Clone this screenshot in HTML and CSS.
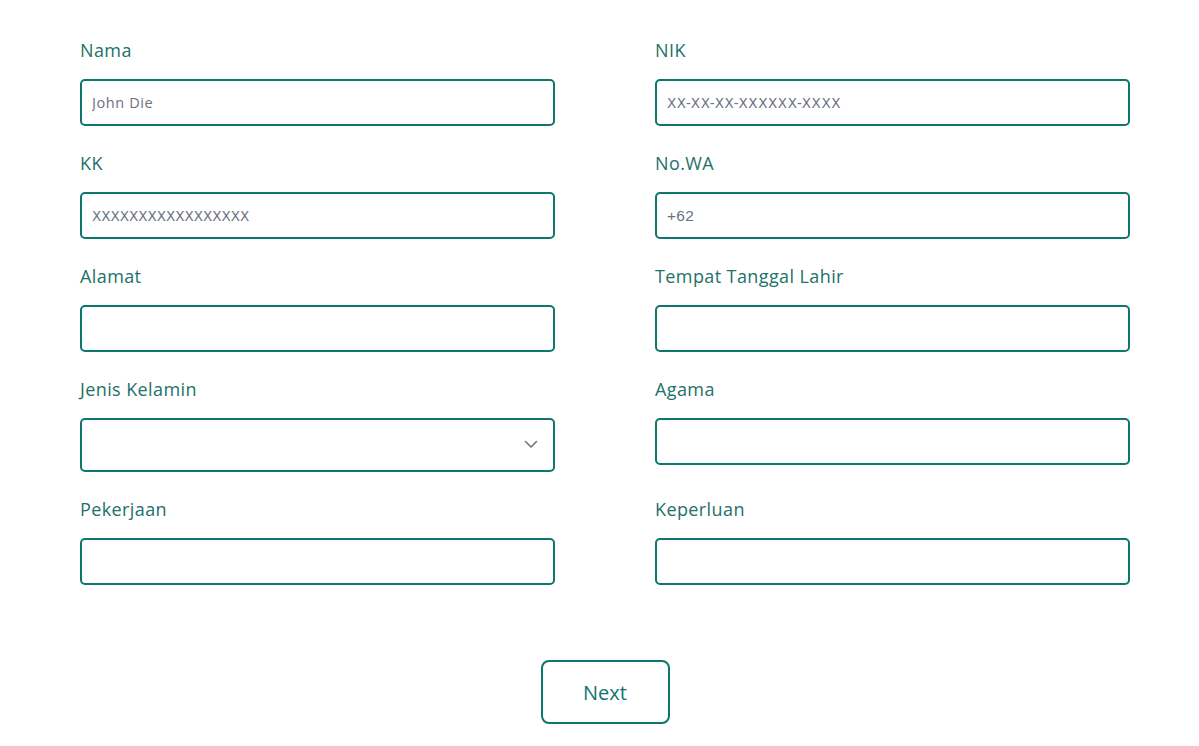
FILE: index.html
```html
<!DOCTYPE html>
<html lang="id">
<head>
<meta charset="utf-8">
<title>Form</title>
<link rel="stylesheet" href="styles.css">
</head>
<body>
<main class="page">
  <form class="form">
    <div class="grid">
      <div class="field">
        <label class="label">Nama</label>
        <input class="input" type="text" placeholder="John Die">
      </div>
      <div class="field">
        <label class="label">NIK</label>
        <input class="input mono nik" type="text" placeholder="XX-XX-XX-XXXXXX-XXXX">
      </div>
      <div class="field">
        <label class="label">KK</label>
        <input class="input mono" type="text" placeholder="XXXXXXXXXXXXXXXXX">
      </div>
      <div class="field">
        <label class="label">No.WA</label>
        <input class="input alt" type="text" placeholder="+62">
      </div>
      <div class="field">
        <label class="label">Alamat</label>
        <input class="input" type="text">
      </div>
      <div class="field">
        <label class="label">Tempat Tanggal Lahir</label>
        <input class="input" type="text">
      </div>
      <div class="field">
        <label class="label">Jenis Kelamin</label>
        <div class="select-wrap">
          <select class="select"><option></option></select>
          <svg class="chevron" width="14" height="9" viewBox="0 0 14 9"><path d="M1.5 1.5 L7 7 L12.5 1.5" fill="none" stroke="#6b7280" stroke-width="1.6" stroke-linecap="round" stroke-linejoin="round"/></svg>
        </div>
      </div>
      <div class="field">
        <label class="label">Agama</label>
        <input class="input" type="text">
      </div>
      <div class="field">
        <label class="label">Pekerjaan</label>
        <input class="input" type="text">
      </div>
      <div class="field">
        <label class="label">Keperluan</label>
        <input class="input" type="text">
      </div>
    </div>
    <div class="actions">
      <button class="btn" type="button">Next</button>
    </div>
  </form>
</main>
</body>
</html>
```

FILE: styles.css
```css
* { box-sizing: border-box; }
html, body { margin: 0; padding: 0; background: #ffffff; }
body { font-family: "Open Sans", "Noto Sans", sans-serif; }

.page { padding: 36px 69px 0 80px; }

.form { width: 1050px; }

.grid {
  display: grid;
  grid-template-columns: 475px 475px;
  column-gap: 100px;
  row-gap: 23px;
  align-items: start;
}

.field { display: flex; flex-direction: column; }

.label {
  font-size: 18px;
  line-height: 28px;
  letter-spacing: 0.4px;
  color: #22716a;
  margin-bottom: 15px;
}

.input, .select {
  width: 475px;
  height: 47px;
  border: 2px solid #0f766e;
  border-radius: 5px;
  padding: 0 10px;
  font-family: "Open Sans", sans-serif;
  font-size: 14.5px;
  letter-spacing: 0.6px;
  color: #374151;
  background: #fff;
  outline: none;
}
.input::placeholder { color: #6b7280; }
.input.mono { font-family: "DejaVu Sans", sans-serif; font-size: 13.5px; letter-spacing: 0; }
.input.mono.nik { letter-spacing: 0.6px; }
.input.alt { font-family: "Liberation Sans", sans-serif; font-size: 15.5px; letter-spacing: 0.3px; }

.select-wrap { position: relative; width: 475px; height: 54px; }
.select {
  height: 54px;
  appearance: none;
  -webkit-appearance: none;
}
.chevron { position: absolute; right: 17px; top: 22px; pointer-events: none; }

.actions { display: flex; justify-content: center; margin-top: 75px; }

.btn {
  width: 129px;
  height: 64px;
  border: 2px solid #0f766e;
  border-radius: 8px;
  background: #fff;
  color: #0f766e;
  font-family: "Open Sans", sans-serif;
  font-size: 20px;
  font-weight: 500;
  cursor: pointer;
}
```
